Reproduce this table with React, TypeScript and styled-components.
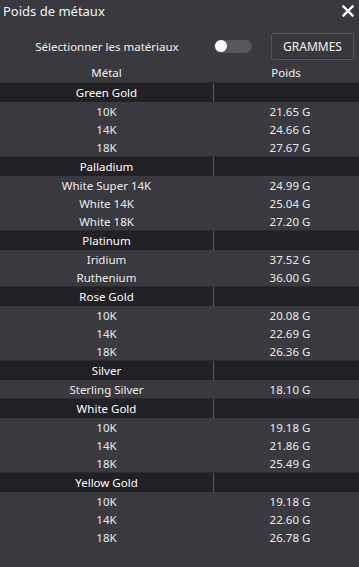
import React, { useState } from "react";
import styled, { createGlobalStyle } from "styled-components";

const GlobalStyle = createGlobalStyle`
  html, body {
    margin: 0;
    padding: 0;
    background: #3a393f;
  }
  * {
    box-sizing: border-box;
  }
`;

const Window = styled.div`
  width: 359px;
  height: 567px;
  background-color: #3a393f;
  color: #f2f2f2;
  font-family: "Noto Sans", "Open Sans", sans-serif;
  font-size: 11.5px;
  display: flex;
  flex-direction: column;
  overflow: hidden;
`;
const TitleBar = styled.div`
  height: 22px;
  display: flex;
  align-items: center;
  justify-content: space-between;
  padding: 0 5px 0 3px;
`;
const Title = styled.span`
  font-size: 13px;
  color: #f4f4f4;
`;
const CloseButton = styled.div`
  width: 12px;
  height: 12px;
  display: flex;
  cursor: pointer;
  svg {
    stroke: #ffffff;
  }
`;
const Controls = styled.div`
  height: 40px;
  display: flex;
  align-items: center;
  padding: 8px 5px 0 0;
`;
const ControlLabel = styled.span`
  width: 214px;
  text-align: center;
`;
const Toggle = styled.div<{ on: boolean }>`
  width: 38px;
  height: 13px;
  border-radius: 7px;
  background-color: ${p => (p.on ? "#6d8fd6" : "#58575e")};
  position: relative;
  cursor: pointer;
  &::after {
    content: "";
    position: absolute;
    top: 0;
    left: ${p => (p.on ? "25px" : "1px")};
    width: 12px;
    height: 12px;
    border-radius: 50%;
    background-color: #ffffff;
  }
`;
const UnitButton = styled.button`
  margin-left: auto;
  width: 83px;
  height: 27px;
  background-color: #38373c;
  border: 1px solid #56555b;
  border-radius: 2px;
  color: #f2f2f2;
  font-family: inherit;
  font-size: 12px;
  padding: 0;
`;
const Table = styled.div`
  display: flex;
  flex-direction: column;
`;
const Row = styled.div<{ h: number }>`
  display: grid;
  grid-template-columns: 213px 1fr;
  height: ${p => p.h}px;
  align-items: center;
`;
const HeadCell = styled.div`
  text-align: center;
`;
const GroupRow = styled.div`
  display: grid;
  grid-template-columns: 213px 1px 1fr;
  height: 20px;
  background-color: #212024;
  border-top: 1px solid #2c2b30;
  color: #ffffff;
`;
const GroupName = styled.div`
  display: flex;
  align-items: center;
  justify-content: center;
`;
const Divider = styled.div`
  background-color: #5a595e;
`;
const Cell = styled.div<{ shift?: number }>`
  text-align: center;
  padding-left: ${p => p.shift || 0}px;
  color: #ececec;
`;

interface IGroup {
  name: string;
  items: [string, string][];
}

const groups: IGroup[] = [
  { name: "Green Gold", items: [["10K", "21.65 G"], ["14K", "24.66 G"], ["18K", "27.67 G"]] },
  { name: "Palladium", items: [["White Super 14K", "24.99 G"], ["White 14K", "25.04 G"], ["White 18K", "27.20 G"]] },
  { name: "Platinum", items: [["Iridium", "37.52 G"], ["Ruthenium", "36.00 G"]] },
  { name: "Rose Gold", items: [["10K", "20.08 G"], ["14K", "22.69 G"], ["18K", "26.36 G"]] },
  { name: "Silver", items: [["Sterling Silver", "18.10 G"]] },
  { name: "White Gold", items: [["10K", "19.18 G"], ["14K", "21.86 G"], ["18K", "25.49 G"]] },
  { name: "Yellow Gold", items: [["10K", "19.18 G"], ["14K", "22.60 G"], ["18K", "26.78 G"]] }
];

const App: React.FC = () => {
  const [selectAll, setSelectAll] = useState(false);
  return (
    <Window>
      <GlobalStyle />
      <TitleBar>
        <Title>Poids de métaux</Title>
        <CloseButton>
          <svg width="12" height="12" viewBox="0 0 12 12" fill="none" strokeWidth="2.4" strokeLinecap="square">
            <path d="M1.5 1.5 L10.5 10.5 M10.5 1.5 L1.5 10.5" />
          </svg>
        </CloseButton>
      </TitleBar>
      <Controls>
        <ControlLabel>Sélectionner les matériaux</ControlLabel>
        <Toggle on={selectAll} onClick={() => setSelectAll(!selectAll)} />
        <UnitButton>GRAMMES</UnitButton>
      </Controls>
      <Table>
        <Row h={20}>
          <HeadCell>Métal</HeadCell>
          <HeadCell>Poids</HeadCell>
        </Row>
        {groups.map(g => (
          <React.Fragment key={g.name}>
            <GroupRow>
              <GroupName>{g.name}</GroupName>
              <Divider />
              <div />
            </GroupRow>
            {g.items.map(([label, weight]) => (
              <Row h={18} key={g.name + label}>
                <Cell>{label}</Cell>
                <Cell shift={8}>{weight}</Cell>
              </Row>
            ))}
          </React.Fragment>
        ))}
      </Table>
    </Window>
  );
};

export default App;
